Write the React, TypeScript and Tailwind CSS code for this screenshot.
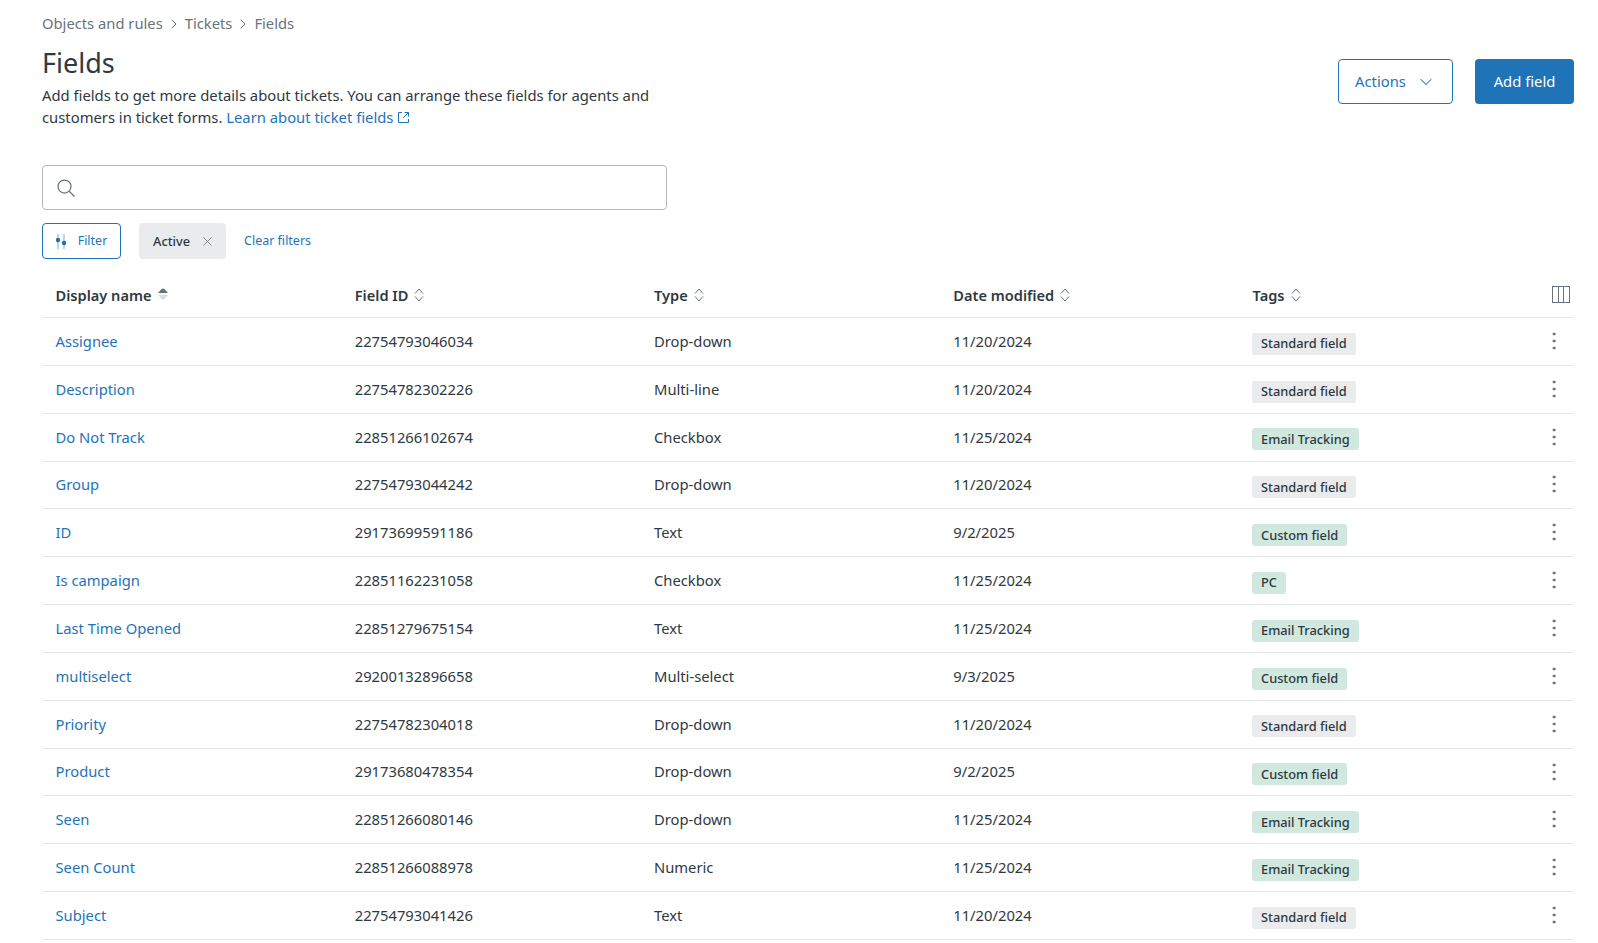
import React from 'react';
import { ChevronDown, ChevronRight, MoreVertical, X } from 'lucide-react';

const rows = [
  { name: 'Assignee', id: '22754793046034', type: 'Drop-down', date: '11/20/2024', tag: 'Standard field' },
  { name: 'Description', id: '22754782302226', type: 'Multi-line', date: '11/20/2024', tag: 'Standard field' },
  { name: 'Do Not Track', id: '22851266102674', type: 'Checkbox', date: '11/25/2024', tag: 'Email Tracking' },
  { name: 'Group', id: '22754793044242', type: 'Drop-down', date: '11/20/2024', tag: 'Standard field' },
  { name: 'ID', id: '29173699591186', type: 'Text', date: '9/2/2025', tag: 'Custom field' },
  { name: 'Is campaign', id: '22851162231058', type: 'Checkbox', date: '11/25/2024', tag: 'PC' },
  { name: 'Last Time Opened', id: '22851279675154', type: 'Text', date: '11/25/2024', tag: 'Email Tracking' },
  { name: 'multiselect', id: '29200132896658', type: 'Multi-select', date: '9/3/2025', tag: 'Custom field' },
  { name: 'Priority', id: '22754782304018', type: 'Drop-down', date: '11/20/2024', tag: 'Standard field' },
  { name: 'Product', id: '29173680478354', type: 'Drop-down', date: '9/2/2025', tag: 'Custom field' },
  { name: 'Seen', id: '22851266080146', type: 'Drop-down', date: '11/25/2024', tag: 'Email Tracking' },
  { name: 'Seen Count', id: '22851266088978', type: 'Numeric', date: '11/25/2024', tag: 'Email Tracking' },
  { name: 'Subject', id: '22754793041426', type: 'Text', date: '11/20/2024', tag: 'Standard field' },
];

function SortIcon({ active }: { active?: boolean }) {
  if (active) {
    return (
      <svg width="12" height="16" viewBox="0 0 12 16" className="ml-[5px] -mt-[3px]">
        <path d="M1 7 L4.5 3 Q6 2 7.5 3 L11 7 Z" fill="#68737d" />
        <path d="M1 9 L4.5 13 Q6 14 7.5 13 L11 9 Z" fill="#d8dcde" />
      </svg>
    );
  }
  return (
    <svg width="12" height="16" viewBox="0 0 12 16" fill="none" stroke="#68737d" className="ml-[5px]">
      <path d="M2 6.5 L6 2 L10 6.5" />
      <path d="M2 9.5 L6 14 L10 9.5" />
    </svg>
  );
}

function Tag({ label }: { label: string }) {
  const standard = label === 'Standard field';
  return (
    <span className={`inline-flex h-[22px] items-center rounded-[3px] px-[9px] text-[12.8px] font-medium text-[#2f3941] ${standard ? 'bg-[#e9ebed]' : 'bg-[#d1e8df]'}`}>
      {label}
    </span>
  );
}

function Header({ label, active }: { label: string; active?: boolean }) {
  return (
    <div className="flex items-center pl-[13.5px] text-[14.6px] font-semibold text-[#2f3941]">
      {label}
      <SortIcon active={active} />
    </div>
  );
}

export default function App() {
  return (
    <div className="min-h-[943px] bg-white pl-[42px] pr-[24px] pt-[12px] text-[#2f3941] [font-family:'Noto_Sans',sans-serif]">
      <nav className="flex h-[23px] items-center text-[14.75px] text-[#68737d]">
        <span>Objects and rules</span>
        <ChevronRight className="mx-[3px] h-4 w-4 text-[#49545c]" strokeWidth={1.25} />
        <span>Tickets</span>
        <ChevronRight className="mx-[3px] h-4 w-4 text-[#49545c]" strokeWidth={1.25} />
        <span>Fields</span>
      </nav>

      <div className="flex items-start justify-between">
        <div className="w-[625px]">
          <h1 className="mt-[11px] h-[34px] text-[27px] leading-[34px] text-[#2f3941]">Fields</h1>
          <p className="mt-[4px] text-[14.8px] leading-[22px]">
            <span className="block">Add fields to get more details about tickets. You can arrange these fields for agents and</span>
            <span className="block">
              customers in ticket forms.{' '}
              <a className="text-[#1f73b7]">
                Learn about ticket fields
                <svg width="13" height="13" viewBox="0 0 13 13" fill="none" stroke="currentColor" className="ml-1 inline align-[-1px]">
                  <path d="M5 1.5H1.5V11.5H11.5V8M7.5 1.5H11.5V5.5M11.5 1.5L6 7" />
                </svg>
              </a>
            </span>
          </p>
        </div>
        <div className="mt-[24px] flex gap-[22px]">
          <button className="flex h-[45px] w-[115px] items-center justify-center gap-[10px] rounded border border-[#1f73b7] text-[14.8px] text-[#1f73b7]">
            Actions
            <ChevronDown className="h-5 w-5" strokeWidth={1.25} />
          </button>
          <button className="h-[45px] w-[99px] rounded bg-[#1f73b7] text-[14.8px] text-white">Add field</button>
        </div>
      </div>

      <div className="mt-[37px] flex h-[45px] w-[625px] items-center rounded border border-[#b4b9be] pl-[14px]">
        <svg width="18" height="18" viewBox="0 0 18 18" fill="none" stroke="#68737d" strokeWidth="1.25">
          <circle cx="7.5" cy="7.5" r="6.5" />
          <path d="M12.2 12.2L17.2 17.2" strokeLinecap="round" />
        </svg>
      </div>

      <div className="mt-[13px] flex h-[36px] items-center">
        <button className="flex h-[36px] w-[79px] items-center justify-center gap-[12px] rounded border border-[#1f73b7] pt-px text-[12.5px] text-[#1f73b7]">
          <svg width="10" height="15" viewBox="0 0 10 15" fill="none">
            <path d="M2 0V15M8 0V15" stroke="#1f73b7" strokeOpacity="0.6" />
            <circle cx="2" cy="6" r="2.2" fill="#1f73b7" />
            <circle cx="8" cy="9" r="2.2" fill="#1f73b7" />
          </svg>
          Filter
        </button>
        <div className="ml-[18px] flex h-[36px] w-[87px] items-center justify-between rounded bg-[#e9ebed] pl-[14px] pr-[11px] pt-px text-[12.8px] font-medium">
          Active
          <X className="h-[15px] w-[15px] text-[#68737d]" strokeWidth={1.25} />
        </div>
        <a className="ml-[18px] pt-px text-[12.5px] text-[#1f73b7]">Clear filters</a>
      </div>

      <div className="mt-[12px] w-[1532px]">
        <div className="grid h-[47px] grid-cols-[299.25px_299.25px_299.25px_299.25px_1fr_40px] items-center border-b border-[#e4e7e9] pt-[3px]">
          <Header label="Display name" active />
          <Header label="Field ID" />
          <Header label="Type" />
          <Header label="Date modified" />
          <Header label="Tags" />
          <svg width="18" height="17" viewBox="0 0 18 17" fill="none" stroke="#68737d" className="mr-[4px] -mt-[3px] justify-self-end">
            <rect x="0.5" y="0.5" width="17" height="16" />
            <path d="M6.5 0.5V16.5M11.5 0.5V16.5" />
          </svg>
        </div>
        {rows.map((row) => (
          <div key={row.id} className="grid h-[47.85px] grid-cols-[299.25px_299.25px_299.25px_299.25px_1fr_40px] items-center border-b border-[#e4e7e9] pb-px text-[14.75px]">
            <a className="pl-[13.5px] text-[#1f73b7]">{row.name}</a>
            <div className="pl-[13.5px]">{row.id}</div>
            <div className="pl-[13.5px]">{row.type}</div>
            <div className="pl-[13.5px]">{row.date}</div>
            <div className="pl-[13px] pt-[4px]"><Tag label={row.tag} /></div>
            <MoreVertical className="h-6 w-6 justify-self-center text-[#49545c]" strokeWidth={1} />
          </div>
        ))}
      </div>
    </div>
  );
}
